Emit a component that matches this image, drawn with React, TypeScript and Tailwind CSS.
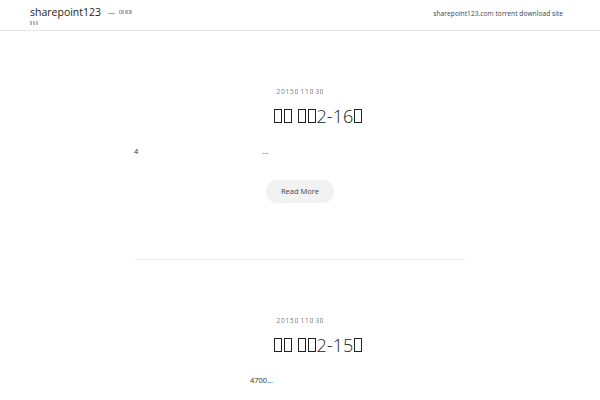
import React from 'react';

// missing-glyph boxes, as the original page shows them
function Tofu({ n = 1, thin = false }: { n?: number; thin?: boolean }) {
    return (
        <>
            {Array.from({ length: n }).map((_, i) => (
                <span
                    key={i}
                    className={`inline-block w-[0.46em] h-[0.78em] align-baseline mx-[0.04em] border ${thin ? 'border-[#b8b8b8]' : 'border-current'}`}
                ></span>
            ))}
        </>
    );
}

interface Post {
    id: string;
    title: React.ReactNode;
    excerpt: React.ReactNode;
    readMore?: boolean;
}

const posts: Post[] = [
    {
        id: 'p16',
        title: (
            <>
                <Tofu n={2} /> <Tofu n={2} />2-16<Tofu />
            </>
        ),
        excerpt: (
            <>
                4<span className="inline-block w-[124px]"></span>...
            </>
        ),
        readMore: true,
    },
    {
        id: 'p15',
        title: (
            <>
                <Tofu n={2} /> <Tofu n={2} />2-15<Tofu />
            </>
        ),
        excerpt: <span className="pl-[116px]">4700...</span>,
    },
];

function PostDate() {
    return (
        <div className="text-center text-[6.5px] tracking-[0.8px] text-[#777] leading-none">
            2015<Tofu thin /> 11<Tofu thin /> 3<Tofu thin />
        </div>
    );
}

function Header() {
    return (
        <header className="h-[31px] border-b border-[#e6e6e6] flex items-start justify-between pl-[30px] pr-[37px]">
            <div className="pt-[7px] leading-none">
                <div className="flex items-center">
                    <span className="text-[10.5px] text-[#222]">sharepoint123</span>
                    <span className="ml-[7px] text-[7px] text-[#555]">—</span>
                    <span className="ml-[4px] text-[5px]">
                        <Tofu n={5} thin />
                    </span>
                </div>
                <div className="mt-[3px] text-[5px]">
                    <Tofu n={3} thin />
                </div>
            </div>
            <nav className="pt-[11px] text-[6.7px] text-[#444] leading-none">sharepoint123.com torrent download site</nav>
        </header>
    );
}

function PostCard({ post }: { post: Post }) {
    return (
        <article className="pt-[58px] pb-[56px]">
            <PostDate />
            <h2 className="mt-[11px] pl-[36px] text-center text-[18px] text-[#222] font-light leading-none">{post.title}</h2>
            <p className="mt-[23px] text-[7.5px] text-[#333] leading-none">{post.excerpt}</p>
            {post.readMore && (
                <div className="mt-[25px] flex justify-center">
                    <button className="w-[68px] h-[23px] rounded-full bg-[#f2f2f2] text-[7.5px] text-[#444]">Read More</button>
                </div>
            )}
        </article>
    );
}

export default function App() {
    return (
        <div className="min-h-[400px] bg-white font-['Open_Sans',sans-serif]">
            <Header />
            <main className="w-[332px] mx-auto">
                {posts.map((post, i) => (
                    <div key={post.id} className={i > 0 ? 'border-t border-[#eeeeee]' : ''}>
                        <PostCard post={post} />
                    </div>
                ))}
            </main>
        </div>
    );
}
